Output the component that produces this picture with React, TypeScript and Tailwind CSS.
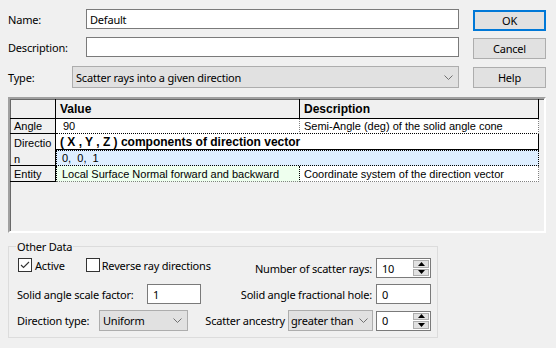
import React from "react";

const Chevron = () => (
  <svg width="9" height="5" viewBox="0 0 9 5">
    <path d="M0.5 0.5 L4.5 4.5 L8.5 0.5" fill="none" stroke="#707070" strokeWidth="1" />
  </svg>
);

const Spin = ({ value }: { value: string }) => (
  <div className="flex h-[20px] w-[55px] border border-[#7a7a7a] bg-white">
    <div className="flex flex-1 items-center pl-[5px]">{value}</div>
    <div className="flex w-[17px] flex-col gap-[1px] py-[1px] pr-[1px]">
      <div className="flex flex-1 items-center justify-center border border-[#adadad] bg-[#e1e1e1]">
        <svg width="7" height="4" viewBox="0 0 7 4">
          <path d="M0 4 L3.5 0 L7 4 Z" fill="#000" />
        </svg>
      </div>
      <div className="flex flex-1 items-center justify-center border border-[#adadad] bg-[#e1e1e1]">
        <svg width="7" height="4" viewBox="0 0 7 4">
          <path d="M0 0 L7 0 L3.5 4 Z" fill="#000" />
        </svg>
      </div>
    </div>
  </div>
);

const Box = ({ value, w }: { value: string; w: string }) => (
  <div className={`flex h-[20px] ${w} items-center border border-[#7a7a7a] bg-white pl-[5px]`}>{value}</div>
);

const Check = ({ checked }: { checked?: boolean }) => (
  <div className="flex h-[14px] w-[14px] shrink-0 items-center justify-center border border-[#333] bg-white">
    {checked && (
      <svg width="12" height="12" viewBox="0 0 12 12">
        <path d="M2 6 L4.5 8.5 L10 3" fill="none" stroke="#333" strokeWidth="1.1" />
      </svg>
    )}
  </div>
);

export default function App() {
  return (
    <div className="h-[348px] w-[556px] whitespace-nowrap bg-[#f0f0f0] font-['Noto_Sans',sans-serif] text-[11px] leading-none tracking-[-0.2px] text-black">
      {/* Top section */}
      <div className="flex pl-2 pt-[9px]">
        <div className="flex w-[451px] flex-col">
          <div className="flex h-[20px] items-center">
            <span className="w-[78px]">Name:</span>
            <div className="flex h-[20px] flex-1 items-center border border-[#7a7a7a] bg-white pl-[3px]">Default</div>
          </div>
          <div className="mt-[8px] flex h-[20px] items-center">
            <span className="w-[78px]">Description:</span>
            <div className="h-[20px] flex-1 border border-[#7a7a7a] bg-white" />
          </div>
          <div className="mt-[9px] flex h-[22px] items-center">
            <span className="w-[64px]">Type:</span>
            <div className="flex h-[22px] flex-1 items-center justify-between border border-[#adadad] bg-[#e1e1e1] pl-[3px] pr-[5px]">
              <span>Scatter rays into a given direction</span>
              <Chevron />
            </div>
          </div>
        </div>
        <div className="ml-[14px] flex w-[73px] flex-col">
          <div className="mt-[1px] flex h-[21px] items-center justify-center border-2 border-[#0078d7] bg-[#e1e1e1]">OK</div>
          <div className="mt-[7px] flex h-[21px] items-center justify-center border border-[#adadad] bg-[#e1e1e1]">Cancel</div>
          <div className="mt-[8px] flex h-[21px] items-center justify-center border border-[#adadad] bg-[#e1e1e1]">Help</div>
        </div>
      </div>

      {/* Grid */}
      <div className="ml-2 mt-[9px] h-[136px] w-[538px] border-2 border-b-white border-l-[#a0a0a0] border-r-white border-t-[#a0a0a0] bg-[#f0f0f0] shadow-[inset_1px_1px_0_#696969] font-['Liberation_Sans',Arial,sans-serif] text-[11px] tracking-normal whitespace-normal">
        <div className="grid grid-cols-[46px_244px_239px] grid-rows-[20px_15px_16px_16px_16px] leading-[14px]">
          <div className="border-b border-r border-black" />
          <div className="flex items-center border-b border-r border-black pl-[4px] text-[12px] font-bold">Value</div>
          <div className="flex items-center border-b border-r border-black pl-[4px] text-[12px] font-bold">Description</div>

          <div className="flex items-center border-b border-r border-black pl-[4px]">Angle</div>
          <div className="flex items-center border-b border-r border-dotted border-b-solid border-b-black border-r-[#808080] bg-white pl-[7px]">90</div>
          <div className="flex items-center border-b border-r border-dotted border-b-solid border-b-black border-r-[#808080] bg-white pl-[4px]">Semi-Angle (deg) of the solid angle cone</div>

          <div className="row-span-2 break-all border-b border-r border-black pl-[4px] pt-[1px] leading-[16px]">Direction</div>
          <div className="col-span-2 flex items-center border-b border-r border-black bg-white pl-[4px] text-[12px] font-bold">( X , Y , Z ) components of direction vector</div>
          <div className="col-span-2 flex items-center border border-dotted border-black bg-[#ddeeff] pl-[5px]">0,&nbsp; 0,&nbsp; 1</div>

          <div className="flex items-center border-b border-r border-black pl-[4px]">Entity</div>
          <div className="flex items-center border-b border-l border-r border-dotted border-b-[#808080] border-l-black border-r-black bg-[#eeffee] pl-[5px]">Local Surface Normal forward and backward</div>
          <div className="flex items-center border-b border-r border-dotted border-[#808080] bg-white pl-[4px]">Coordinate system of the direction vector</div>
        </div>
      </div>

      {/* Other Data */}
      <div className="relative ml-2 mt-[13px] flex h-[92px] w-[430px] flex-col border border-[#dcdcdc] pl-[8px] pr-[6px] pt-[11px]">
        <span className="absolute left-[7px] top-[-8px] bg-[#f0f0f0] px-[1px] leading-[16px]">Other Data</span>
        <div className="flex h-[20px] justify-between">
          <div className="flex h-[14px] items-center pl-[1px]">
            <Check checked />
            <span className="ml-[3px]">Active</span>
            <div className="ml-[21px]"><Check /></div>
            <span className="ml-[2px]">Reverse ray directions</span>
          </div>
          <div className="flex items-center gap-[4px]">
            <span>Number of scatter rays:</span>
            <Spin value="10" />
          </div>
        </div>
        <div className="mt-[6px] flex h-[20px] items-center justify-between">
          <div className="flex items-center">
            <span className="w-[130px]">Solid angle scale factor:</span>
            <Box value="1" w="w-[54px]" />
          </div>
          <div className="flex items-center gap-[4px]">
            <span>Solid angle fractional hole:</span>
            <Box value="0" w="w-[55px]" />
          </div>
        </div>
        <div className="mt-[6px] flex h-[21px] items-center justify-between">
          <div className="flex items-center">
            <span className="w-[82px]">Direction type:</span>
            <div className="flex h-[21px] w-[89px] items-center justify-between border border-[#adadad] bg-[#e1e1e1] pl-[3px] pr-[5px]">
              <span>Uniform</span>
              <Chevron />
            </div>
          </div>
          <div className="flex items-center">
            <span>Scatter ancestry</span>
            <div className="ml-[3px] flex h-[21px] w-[85px] items-center justify-between border border-[#adadad] bg-[#e1e1e1] pl-[2px] pr-[4px]">
              <span>greater than</span>
              <Chevron />
            </div>
            <div className="ml-[3px]"><Spin value="0" /></div>
          </div>
        </div>
      </div>
    </div>
  );
}
